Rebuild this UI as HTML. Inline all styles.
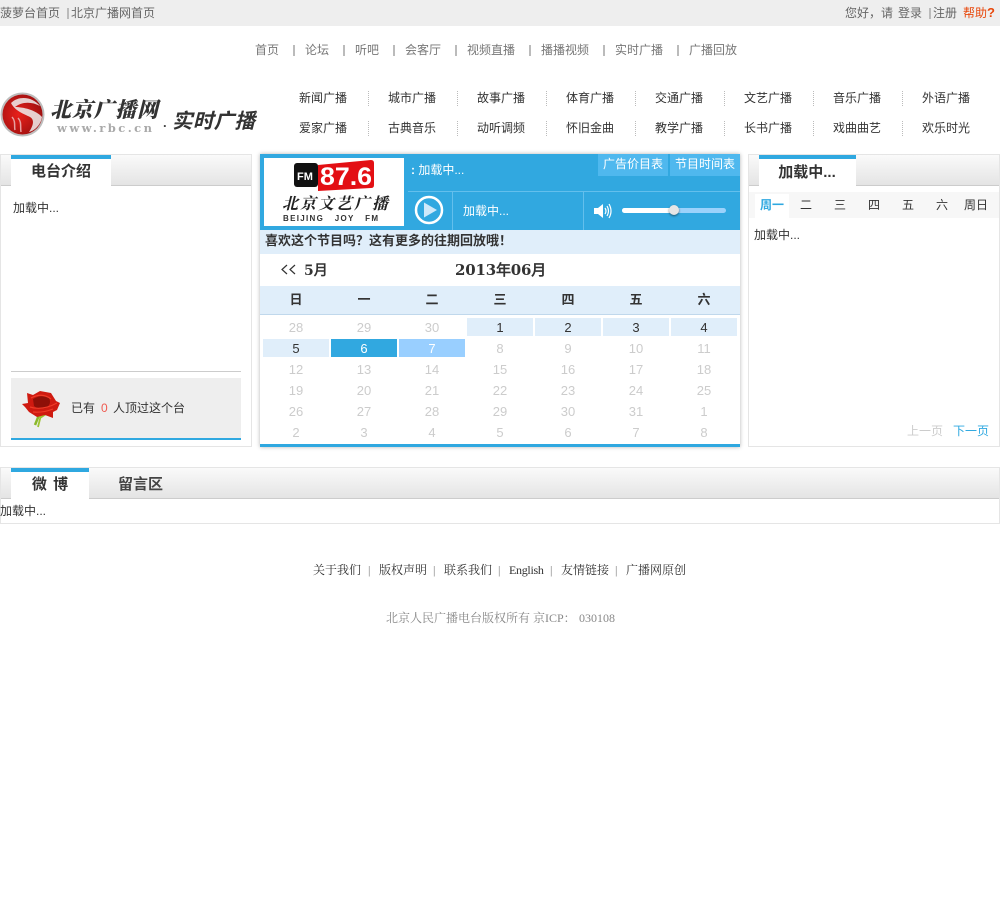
<!DOCTYPE html>
<html lang="zh"><head><meta charset="utf-8"><title>实时广播</title>
<style>
html,body{margin:0;padding:0;background:#fff;width:1000px;height:909px;overflow:hidden}
body{position:relative;font:12px/16px "Liberation Sans","WenQuanYi Zen Hei","Noto Sans CJK SC",sans-serif;color:#333}
.a,.t{position:absolute}
.t{white-space:nowrap}
.c{transform:translateX(-50%)}
.g{color:#666}.n{color:#777}
.d{position:absolute;width:0;height:15px;border-left:1px dotted #bbb}
.s{position:absolute;width:2px;height:11px;background:#bbb}
.b{font-weight:bold}
.hd{position:absolute;background:linear-gradient(#fafafa,#e4e4e4);border-bottom:1px solid #ccc}
.tab{position:absolute;background:#fff;border-top:4px solid #2fa8e0}
.box{position:absolute;border:1px solid #e5e5e5;box-sizing:border-box;background:#fff}
.cell{position:absolute;width:66px;height:18px;line-height:19px;text-align:center;font-size:13px;color:#ccc}
.on{background:#e0eefa;color:#333}
.wk{position:absolute;top:292px;width:68px;text-align:center;font-weight:bold;color:#333;font-size:13px}
.dt{position:absolute;top:197px;width:34px;text-align:center}
.f{font-family:"Liberation Serif","WenQuanYi Zen Hei","Noto Serif CJK SC",serif}
.ds{font-family:"DejaVu Serif","WenQuanYi Zen Hei",serif;font-weight:bold}
</style></head><body>

<div class="a" style="left:0;top:0;width:1000px;height:26px;background:#eee"></div>
<div class="t g" style="left:0;top:5px">菠萝台首页</div>
<div class="a" style="left:67px;top:8px;width:2px;height:11px;background:#bbb"></div>
<div class="t g" style="left:71px;top:5px">北京广播网首页</div>
<div class="t g" style="left:845px;top:5px">您好，请</div>
<div class="t g" style="left:898px;top:5px">登录</div>
<div class="a" style="left:929px;top:8px;width:2px;height:11px;background:#bbb"></div>
<div class="t g" style="left:933px;top:5px">注册</div>
<div class="t" style="left:963px;top:5px;color:#e8480c">帮助<b style="font-size:13px">?</b></div>

<div class="t n" style="left:255px;top:42px">首页</div><div class="s" style="left:293px;top:45px"></div>
<div class="t n" style="left:305px;top:42px">论坛</div><div class="s" style="left:343px;top:45px"></div>
<div class="t n" style="left:355px;top:42px">听吧</div><div class="s" style="left:393px;top:45px"></div>
<div class="t n" style="left:405px;top:42px">会客厅</div><div class="s" style="left:455px;top:45px"></div>
<div class="t n" style="left:467px;top:42px">视频直播</div><div class="s" style="left:529px;top:45px"></div>
<div class="t n" style="left:541px;top:42px">播播视频</div><div class="s" style="left:603px;top:45px"></div>
<div class="t n" style="left:615px;top:42px">实时广播</div><div class="s" style="left:677px;top:45px"></div>
<div class="t n" style="left:689px;top:42px">广播回放</div>

<svg class="a" style="left:0;top:90px" width="270" height="50" viewBox="0 0 270 50">
<defs>
<radialGradient id="r1" cx=".4" cy=".5" r=".6"><stop offset="0" stop-color="#e8201a"/><stop offset="1" stop-color="#a01010"/></radialGradient>
</defs>
<circle cx="22.500" cy="24.500" r="22" fill="#bdbdbd"/>
<circle cx="22.500" cy="24.500" r="20" fill="url(#r1)"/>
<path d="M11 13C19 5 33 7 40 16C31 11 21 12 15 17C23 17 36 20 42 27C41 35 34 41 29 42C33 36 35 30 30 27C24 24 15 21 11 13Z" fill="#eee" opacity=".85"/>
<path d="M12 27C16 31 14 37 15 40M18 28C22 32 20 37 21 42" stroke="#e6a0a0" stroke-width="1.500" fill="none"/>
<text x="50" y="27" font-family="Liberation Serif,Noto Serif CJK SC,serif" font-weight="900" font-style="italic" font-size="21" fill="#333" textLength="108">北京广播网</text>
<text x="57" y="42" font-family="DejaVu Serif,serif" font-weight="bold" font-size="11.500" fill="#aaa" textLength="95">www.rbc.cn</text>
<text x="163" y="37" font-family="Liberation Sans,sans-serif" font-weight="bold" font-size="13" fill="#444">.</text>
<text x="172" y="38" font-family="WenQuanYi Zen Hei,Noto Sans CJK SC,sans-serif" font-weight="bold" font-style="italic" font-size="20.500" fill="#333" textLength="83">实时广播</text>
</svg>

<div class="t" style="left:299px;top:90px">新闻广播</div><div class="d" style="left:368px;top:91px"></div>
<div class="t" style="left:388px;top:90px">城市广播</div><div class="d" style="left:457px;top:91px"></div>
<div class="t" style="left:477px;top:90px">故事广播</div><div class="d" style="left:546px;top:91px"></div>
<div class="t" style="left:566px;top:90px">体育广播</div><div class="d" style="left:635px;top:91px"></div>
<div class="t" style="left:655px;top:90px">交通广播</div><div class="d" style="left:724px;top:91px"></div>
<div class="t" style="left:744px;top:90px">文艺广播</div><div class="d" style="left:813px;top:91px"></div>
<div class="t" style="left:833px;top:90px">音乐广播</div><div class="d" style="left:902px;top:91px"></div>
<div class="t" style="left:922px;top:90px">外语广播</div>

<div class="t" style="left:299px;top:120px">爱家广播</div><div class="d" style="left:368px;top:121px"></div>
<div class="t" style="left:388px;top:120px">古典音乐</div><div class="d" style="left:457px;top:121px"></div>
<div class="t" style="left:477px;top:120px">动听调频</div><div class="d" style="left:546px;top:121px"></div>
<div class="t" style="left:566px;top:120px">怀旧金曲</div><div class="d" style="left:635px;top:121px"></div>
<div class="t" style="left:655px;top:120px">教学广播</div><div class="d" style="left:724px;top:121px"></div>
<div class="t" style="left:744px;top:120px">长书广播</div><div class="d" style="left:813px;top:121px"></div>
<div class="t" style="left:833px;top:120px">戏曲曲艺</div><div class="d" style="left:902px;top:121px"></div>
<div class="t" style="left:922px;top:120px">欢乐时光</div>

<!-- left panel -->
<div class="box" style="left:0;top:154px;width:252px;height:293px"></div>
<div class="hd" style="left:1px;top:155px;width:250px;height:30px"></div>
<div class="tab" style="left:11px;top:155px;width:100px;height:27px"></div>
<div class="t b c" style="left:61px;top:164px;font-size:15px">电台介绍</div>
<div class="t" style="left:13px;top:200px">加载中...</div>
<div class="a" style="left:11px;top:371px;width:230px;height:1px;background:#ccc"></div>
<div class="a" style="left:11px;top:378px;width:230px;height:60px;background:#eee;border-bottom:2px solid #2fa8e0"></div>
<svg class="a" style="left:20px;top:388px" width="44" height="40" viewBox="0 0 44 40">
<path d="M19 27L15 37" stroke="#8ab82a" stroke-width="2.500"/><path d="M21 27L18 39M20 30L26 26" stroke="#9cc431" stroke-width="1.800" fill="none"/>
<path d="M2 16L8 15L7 5L13 7L20 3L31 5L36 13L40 15L37 22L33 24L33 30L25 27L17 29L9 24L5 19Z" fill="#cf1a10"/>
<path d="M13 11Q21 6 29 10Q32 16 26 20Q18 22 14 18Z" fill="#8e1008"/>
<path d="M11 10Q22 4 31 11M10 19Q22 23 37 15M13 24Q23 25 33 21" stroke="#ef3c28" stroke-width="1.200" fill="none"/>
</svg>
<div class="t" style="left:71px;top:400px">已有</div>
<div class="t" style="left:101px;top:400px;color:#ef5a50">0</div>
<div class="t" style="left:113px;top:400px">人顶过这个台</div>

<!-- centre -->
<div class="a" style="left:260px;top:154px;width:480px;height:293px;background:#fff;box-shadow:0 0 4px rgba(0,0,0,.3)"></div>
<div class="a" style="left:260px;top:154px;width:480px;height:76px;background:#31a8e0"></div>
<div class="a" style="left:264px;top:158px;width:140px;height:68px;background:#fff"></div>
<svg class="a" style="left:264px;top:158px" width="140" height="68" viewBox="0 0 140 68">
<rect x="30" y="5" width="24" height="24" rx="3" fill="#111"/>
<path d="M54 7L107 2Q110 2 110 5V27Q110 30 107 30L54 33Z" fill="#e30f14"/>
<text x="33" y="22" font-family="Liberation Sans,sans-serif" font-weight="bold" font-size="11" fill="#fff">FM</text>
<text x="56" y="27" font-family="Liberation Sans,sans-serif" font-weight="bold" font-size="25" fill="#fff" textLength="52" lengthAdjust="spacingAndGlyphs">87.6</text>
<text x="18" y="51" font-family="Liberation Serif,Noto Serif CJK SC,serif" font-style="italic" font-weight="bold" font-size="16" fill="#222" textLength="106">北京文艺广播</text>
<text x="19" y="63" font-family="Liberation Sans,sans-serif" font-weight="bold" font-size="8" fill="#333" textLength="95" xml:space="preserve">BEIJING   JOY   FM</text>
</svg>
<div class="t" style="left:411px;top:162px;color:#fff"><b>:</b> 加载中...</div>
<div class="t" style="left:598px;top:154px;width:70px;height:22px;line-height:21px;background:#4fb8ee;color:#fff;text-align:center">广告价目表</div>
<div class="t" style="left:670px;top:154px;width:70px;height:22px;line-height:21px;background:#4fb8ee;color:#fff;text-align:center">节目时间表</div>
<div class="a" style="left:408px;top:191px;width:332px;height:1px;background:#63bfec"></div>
<div class="a" style="left:452px;top:192px;width:1px;height:38px;background:#63bfec"></div>
<div class="a" style="left:583px;top:192px;width:1px;height:38px;background:#63bfec"></div>
<svg class="a" style="left:414px;top:195px" width="30" height="30"><circle cx="15" cy="15" r="13" fill="none" stroke="#fff" stroke-width="2.500"/><path d="M10 7.500L23 15L10 22.500Z" fill="#cfe9fa"/></svg>
<div class="t" style="left:463px;top:203px;color:#fff">加载中...</div>
<svg class="a" style="left:593px;top:201px" width="20" height="20" fill="none"><path d="M1 7H5L10 3V17L5 13H1Z" fill="#fff"/><path d="M12 7Q14 10 12 13M14 5Q17 10 14 15M16 3Q20 10 16 17" stroke="#fff" stroke-width="1.200"/></svg>
<div class="a" style="left:622px;top:208px;width:104px;height:5px;border-radius:3px;background:#9bd2fb"></div>
<div class="a" style="left:622px;top:208px;width:52px;height:5px;border-radius:3px;background:#fff"></div>
<div class="a" style="left:669px;top:205px;width:10px;height:10px;border-radius:50%;background:#e6e6e6;box-shadow:0 1px 2px rgba(0,0,0,.5)"></div>

<div class="a" style="left:260px;top:230px;width:480px;height:24px;background:#e0eefa"></div>
<div class="t b" style="left:265px;top:233px;font-size:13px">喜欢这个节目吗？这有更多的往期回放哦！</div>
<svg class="a" style="left:281px;top:264px" width="16" height="11" fill="none" stroke="#333" stroke-width="1.200"><path d="M6 1L1 5.500L6 10M14 1L9 5.500L14 10"/></svg>
<div class="t ds" style="left:304px;top:263px;font-size:14px">5月</div>
<div class="t ds" style="left:455px;top:262px;font-size:15px;letter-spacing:-.2px">2013年06月</div>
<div class="a" style="left:260px;top:286px;width:480px;height:28px;background:#e0eefa;border-bottom:1px solid #c0d8ec"></div>
<div class="wk" style="left:262px">日</div><div class="wk" style="left:330px">一</div><div class="wk" style="left:398px">二</div><div class="wk" style="left:466px">三</div><div class="wk" style="left:534px">四</div><div class="wk" style="left:602px">五</div><div class="wk" style="left:670px">六</div>

<div class="cell" style="left:263px;top:318px">28</div><div class="cell" style="left:331px;top:318px">29</div><div class="cell" style="left:399px;top:318px">30</div><div class="cell on" style="left:467px;top:318px">1</div><div class="cell on" style="left:535px;top:318px">2</div><div class="cell on" style="left:603px;top:318px">3</div><div class="cell on" style="left:671px;top:318px">4</div>
<div class="cell on" style="left:263px;top:339px">5</div><div class="cell" style="left:331px;top:339px;background:#31a8e0;color:#fff">6</div><div class="cell" style="left:399px;top:339px;background:#99cfff;color:#fff">7</div><div class="cell" style="left:467px;top:339px">8</div><div class="cell" style="left:535px;top:339px">9</div><div class="cell" style="left:603px;top:339px">10</div><div class="cell" style="left:671px;top:339px">11</div>
<div class="cell" style="left:263px;top:360px">12</div><div class="cell" style="left:331px;top:360px">13</div><div class="cell" style="left:399px;top:360px">14</div><div class="cell" style="left:467px;top:360px">15</div><div class="cell" style="left:535px;top:360px">16</div><div class="cell" style="left:603px;top:360px">17</div><div class="cell" style="left:671px;top:360px">18</div>
<div class="cell" style="left:263px;top:381px">19</div><div class="cell" style="left:331px;top:381px">20</div><div class="cell" style="left:399px;top:381px">21</div><div class="cell" style="left:467px;top:381px">22</div><div class="cell" style="left:535px;top:381px">23</div><div class="cell" style="left:603px;top:381px">24</div><div class="cell" style="left:671px;top:381px">25</div>
<div class="cell" style="left:263px;top:402px">26</div><div class="cell" style="left:331px;top:402px">27</div><div class="cell" style="left:399px;top:402px">28</div><div class="cell" style="left:467px;top:402px">29</div><div class="cell" style="left:535px;top:402px">30</div><div class="cell" style="left:603px;top:402px">31</div><div class="cell" style="left:671px;top:402px">1</div>
<div class="cell" style="left:263px;top:423px">2</div><div class="cell" style="left:331px;top:423px">3</div><div class="cell" style="left:399px;top:423px">4</div><div class="cell" style="left:467px;top:423px">5</div><div class="cell" style="left:535px;top:423px">6</div><div class="cell" style="left:603px;top:423px">7</div><div class="cell" style="left:671px;top:423px">8</div>
<div class="a" style="left:260px;top:444px;width:480px;height:3px;background:#2fa8e0"></div>

<!-- right panel -->
<div class="box" style="left:748px;top:154px;width:252px;height:293px"></div>
<div class="hd" style="left:749px;top:155px;width:250px;height:30px"></div>
<div class="tab" style="left:759px;top:155px;width:97px;height:27px"></div>
<div class="t b c" style="left:807px;top:165px;font-size:15px">加载中...</div>
<div class="a" style="left:749px;top:192px;width:250px;height:26px;background:#f7f7f7"></div>
<div class="a" style="left:755px;top:194px;width:34px;height:24px;background:#fff"></div>
<div class="dt b" style="left:755px;color:#2fa8e0">周一</div><div class="dt" style="left:789px">二</div><div class="dt" style="left:823px">三</div><div class="dt" style="left:857px">四</div><div class="dt" style="left:891px">五</div><div class="dt" style="left:925px">六</div><div class="dt" style="left:959px">周日</div>
<div class="t" style="left:754px;top:227px">加载中...</div>
<div class="t" style="left:907px;top:423px;color:#ccc">上一页</div>
<div class="t" style="left:953px;top:423px;color:#2fa8e0">下一页</div>

<!-- bottom -->
<div class="box" style="left:0;top:467px;width:1000px;height:57px"></div>
<div class="hd" style="left:1px;top:468px;width:998px;height:30px"></div>
<div class="tab" style="left:11px;top:468px;width:78px;height:27px"></div>
<div class="t b c" style="left:50px;top:477px;font-size:15px;word-spacing:2px">微 博</div>
<div class="t" style="left:118px;top:477px;font-size:15px;font-weight:bold;color:#444">留言区</div>
<div class="t" style="left:0;top:503px">加载中...</div>

<div class="t f" style="left:313px;top:562px">关于我们</div><div class="t f" style="left:368px;top:562px;color:#777">|</div>
<div class="t f" style="left:379px;top:562px">版权声明</div><div class="t f" style="left:433px;top:562px;color:#777">|</div>
<div class="t f" style="left:444px;top:562px">联系我们</div><div class="t f" style="left:498px;top:562px;color:#777">|</div>
<div class="t f" style="left:509px;top:562px;letter-spacing:-.3px">English</div><div class="t f" style="left:550px;top:562px;color:#777">|</div>
<div class="t f" style="left:561px;top:562px">友情链接</div><div class="t f" style="left:615px;top:562px;color:#777">|</div>
<div class="t f" style="left:626px;top:562px">广播网原创</div>
<div class="t f" style="left:386px;top:610px;color:#888">北京人民广播电台版权所有 京ICP：</div>
<div class="t f" style="left:579px;top:610px;color:#888">030108</div>

</body></html>
